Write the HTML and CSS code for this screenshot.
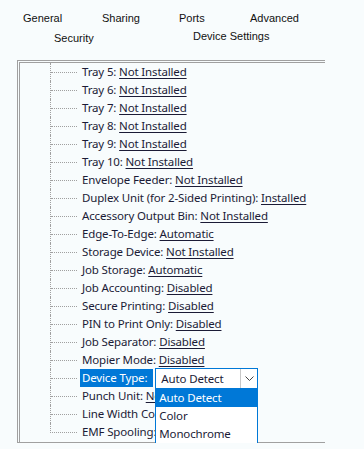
FILE: index.html
```html
<!DOCTYPE html>
<html>
<head>
    <title>Printer Properties - Device Settings</title>
    <link rel="stylesheet" href="styles.css">
</head>
<body>
    <div class="tabs">
        <div class="tab-row">
            <span class="tab tab-general">General</span>
            <span class="tab tab-sharing">Sharing</span>
            <span class="tab tab-ports">Ports</span>
            <span class="tab">Advanced</span>
        </div>
        <div class="tab-row second">
            <span class="tab tab-security">Security</span>
            <span class="tab tab-active">Device Settings</span>
        </div>
    </div>

    <div class="tree-box">
        <ul class="tree">
            <li><span class="item">Tray 5: <u>Not Installed</u></span></li>
            <li><span class="item">Tray 6: <u>Not Installed</u></span></li>
            <li><span class="item">Tray 7: <u>Not Installed</u></span></li>
            <li><span class="item">Tray 8: <u>Not Installed</u></span></li>
            <li><span class="item">Tray 9: <u>Not Installed</u></span></li>
            <li><span class="item">Tray 10: <u>Not Installed</u></span></li>
            <li><span class="item">Envelope Feeder: <u>Not Installed</u></span></li>
            <li><span class="item">Duplex Unit (for 2-Sided Printing): <u>Installed</u></span></li>
            <li><span class="item">Accessory Output Bin: <u>Not Installed</u></span></li>
            <li><span class="item">Edge-To-Edge: <u>Automatic</u></span></li>
            <li><span class="item">Storage Device: <u>Not Installed</u></span></li>
            <li><span class="item">Job Storage: <u>Automatic</u></span></li>
            <li><span class="item">Job Accounting: <u>Disabled</u></span></li>
            <li><span class="item">Secure Printing: <u>Disabled</u></span></li>
            <li><span class="item">PIN to Print Only: <u>Disabled</u></span></li>
            <li><span class="item">Job Separator: <u>Disabled</u></span></li>
            <li><span class="item">Mopier Mode: <u>Disabled</u></span></li>
            <li class="editing">
                <span class="selected">Device Type:</span>
                <div class="combo">
                    <div class="combo-field">
                        <span class="combo-value">Auto Detect</span>
                        <span class="combo-arrow">
                            <svg width="9" height="5" viewBox="0 0 9 5"><path d="M0.5 0.5 L4.5 4.5 L8.5 0.5" fill="none" stroke="#444" stroke-width="1"/></svg>
                        </span>
                    </div>
                    <div class="combo-list">
                        <div class="option active">Auto Detect</div>
                        <div class="option">Color</div>
                        <div class="option">Monochrome</div>
                    </div>
                </div>
            </li>
            <li><span class="item">Punch Unit: <u>Not Installed</u></span></li>
            <li><span class="item">Line Width Correction: <u>Off</u></span></li>
            <li><span class="item">EMF Spooling: <u>Enabled</u></span></li>
        </ul>
    </div>
</body>
</html>
```

FILE: styles.css
```css
:root {
    --background-color: #F8FCFD;
    --text-color: #1B1B36;
    --border-color: #A0A0A0;
    --select-color: #0078D7;
}

body {
    margin: 0;
    background: var(--background-color);
    color: var(--text-color);
    font-family: "Noto Sans", sans-serif;
}

.tabs {
    font-family: "Liberation Sans", Arial, sans-serif;
    font-size: 11px;
    color: #111;
    padding: 12px 0 0 23px;
    height: 48px;
    box-sizing: border-box;
}

.tab-row {
    display: flex;
    height: 18px;
    line-height: 13px;
}

.tab-row.second {
    padding-left: 31px;
}

.tab-general { width: 79px; }
.tab-sharing { width: 77px; }
.tab-ports { width: 71px; }

.tab-security {
    width: 139px;
    padding-top: 2px;
}

.tree-box {
    margin: 12px 0 0 17px;
    width: 308px;
    height: 383px;
    border-top: 3px double var(--border-color);
    border-left: 3px double var(--border-color);
    border-bottom: 1px solid var(--border-color);
    box-sizing: border-box;
}

.tree {
    list-style: none;
    margin: 0 0 0 30px;
    padding: 0;
    font-size: 11.5px;
    letter-spacing: -0.15px;
}

.tree li {
    display: flex;
    align-items: center;
    height: 18px;
    border-left: 1px dotted var(--border-color);
}

.tree li::before {
    content: "";
    align-self: flex-start;
    width: 26px;
    height: 9px;
    border-bottom: 1px dotted var(--border-color);
    margin-right: 5px;
    flex-shrink: 0;
}

.tree li:last-child {
    border-left: none;
}

.tree li:last-child::before {
    border-left: 1px dotted var(--border-color);
}

.item {
    white-space: nowrap;
    margin-top: -1px;
}

.tree u {
    text-decoration-thickness: 1px;
    text-underline-offset: 2px;
}

.tree li.editing {
    align-items: flex-start;
}

.selected {
    background: var(--select-color);
    color: white;
    height: 18px;
    line-height: 18px;
    padding: 0 6px 0 2px;
    margin-left: -2px;
    margin-right: 2px;
    white-space: nowrap;
}

.combo {
    width: 103px;
    margin-top: -1px;
    position: relative;
    z-index: 1;
}

.combo-field {
    display: flex;
    height: 21px;
    border: 1px solid var(--select-color);
    background: white;
    box-sizing: border-box;
}

.combo-value {
    flex: 1;
    padding-left: 5px;
    line-height: 19px;
}

.combo-arrow {
    width: 16px;
    border-left: 1px solid #c8c8c8;
    display: flex;
    align-items: center;
    justify-content: center;
}

.combo-list {
    position: absolute;
    top: 100%;
    left: 0;
    right: 0;
    background: white;
    border: 1px solid var(--select-color);
    border-top: none;
}

.option {
    height: 18px;
    line-height: 18px;
    padding-left: 3px;
}

.option.active {
    background: var(--select-color);
    color: white;
}
```
